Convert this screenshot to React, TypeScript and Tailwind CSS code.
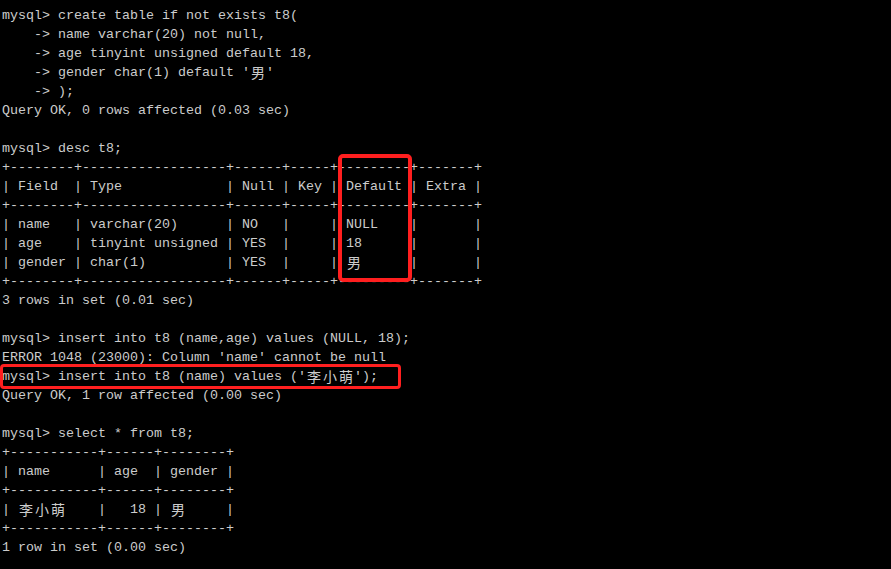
const lines: string[] = [
  "mysql> create table if not exists t8(",
  "    -> name varchar(20) not null,",
  "    -> age tinyint unsigned default 18,",
  "    -> gender char(1) default '男'",
  "    -> );",
  "Query OK, 0 rows affected (0.03 sec)",
  "",
  "mysql> desc t8;",
  "+--------+------------------+------+-----+---------+-------+",
  "| Field  | Type             | Null | Key | Default | Extra |",
  "+--------+------------------+------+-----+---------+-------+",
  "| name   | varchar(20)      | NO   |     | NULL    |       |",
  "| age    | tinyint unsigned | YES  |     | 18      |       |",
  "| gender | char(1)          | YES  |     | 男      |       |",
  "+--------+------------------+------+-----+---------+-------+",
  "3 rows in set (0.01 sec)",
  "",
  "mysql> insert into t8 (name,age) values (NULL, 18);",
  "ERROR 1048 (23000): Column 'name' cannot be null",
  "mysql> insert into t8 (name) values ('李小萌');",
  "Query OK, 1 row affected (0.00 sec)",
  "",
  "mysql> select * from t8;",
  "+-----------+------+--------+",
  "| name      | age  | gender |",
  "+-----------+------+--------+",
  "| 李小萌    |   18 | 男     |",
  "+-----------+------+--------+",
  "1 row in set (0.00 sec)",
];

// CJK characters take two terminal columns
const Line = ({ text }: { text: string }) => {
  const parts: React.ReactNode[] = [];
  let buf = "";
  Array.from(text).forEach((ch, i) => {
    if (/[\u4e00-\u9fff]/.test(ch)) {
      if (buf) parts.push(buf);
      buf = "";
      parts.push(
        <span
          key={i}
          className="inline-block align-top h-[19px] w-[16px] text-center leading-[19px] font-['Noto_Sans_CJK_SC',sans-serif] text-[14px]"
        >
          {ch}
        </span>
      );
    } else {
      buf += ch;
    }
  });
  if (buf) parts.push(buf);
  return <div className="h-[19px] leading-[19px] whitespace-pre">{parts}</div>;
};

export default function App() {
  return (
    <div className="relative w-[891px] h-[569px] overflow-hidden bg-black text-[#cccccc] font-['Liberation_Mono',monospace] text-[13.333px] pl-[2px] pt-[6px]">
      {lines.map((l, i) => (
        <Line key={i} text={l} />
      ))}

      {/* highlight: Default column */}
      <div className="absolute left-[338px] top-[154px] w-[74px] h-[128px] border-4 border-[#ff1f1f] rounded-[5px]" />
      {/* highlight: insert line */}
      <div className="absolute left-[0px] top-[364px] w-[401px] h-[25px] border-[3px] border-[#ff1f1f] rounded-[4px]" />
    </div>
  );
}
